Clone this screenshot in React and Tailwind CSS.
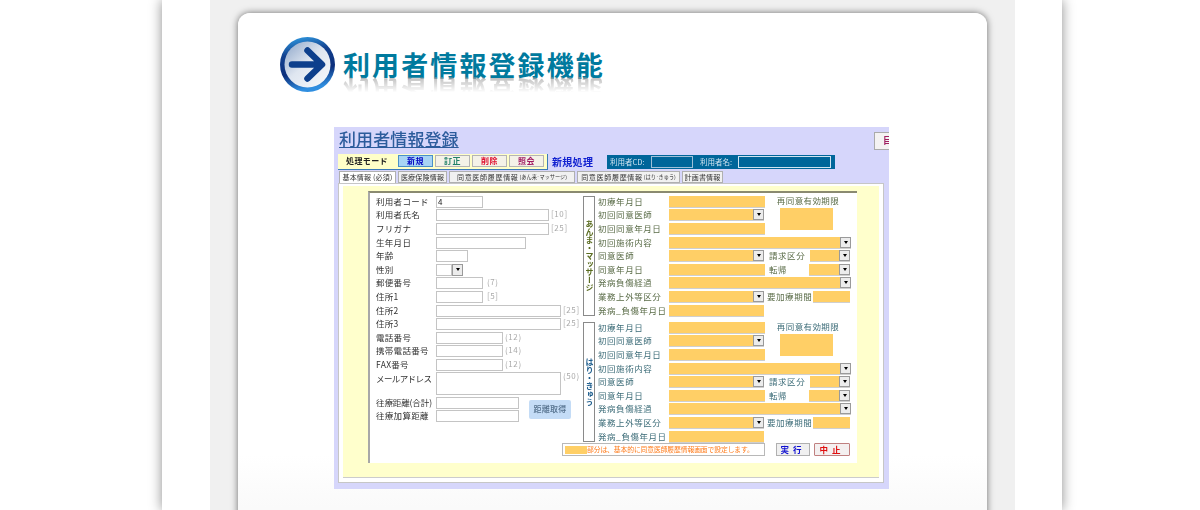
import React from "react";

const jp = "[font-family:'Noto_Sans_CJK_JP',sans-serif]";

function Arrow() {
  return (
    <span className="flex h-full w-[11px] shrink-0 items-center justify-center border border-[#9a9a9a] bg-[#ececec]">
      <span className="h-0 w-0 border-x-[2.5px] border-t-[3px] border-x-transparent border-t-black" />
    </span>
  );
}

function Orange({ w, arrow }) {
  return (
    <span className={`flex h-[12px] shrink-0 items-stretch justify-end border-b border-[#cfcfcf] bg-[#ffcf66] ${w}`}>
      {arrow && <Arrow />}
    </span>
  );
}

function LeftRow({ label, w, note, value, arrow, noteClass = "ml-[2px]", rowH = "h-[13.6px]", inputH, alignTop, labelCls = "tracking-[0.3px]" }) {
  return (
    <div className={`flex ${alignTop ? "items-start" : "items-center"} ${rowH}`}>
      <span className={`-mt-[2px] w-[60px] shrink-0 whitespace-nowrap text-[8.5px] leading-[12px] text-[#333] ${labelCls} ${alignTop ? "pt-[2px]" : ""}`}>{label}</span>
      <span className={`relative flex items-center border border-[#c4c4c4] bg-white pl-[1px] text-[8px] text-[#222] ${w} ${inputH || "h-[12px]"}`}>
        {value}
        {arrow && <span className="absolute -right-[12px] -top-px h-[12px]"><Arrow /></span>}
      </span>
      {note && <span className={`-mt-[2px] whitespace-nowrap text-[8px] tracking-[0.6px] text-[#aaa] ${noteClass}`}>{note}</span>}
    </div>
  );
}

function RightLabel({ children, w = "w-[71px]", cls }) {
  return <span className={`-mt-[2px] shrink-0 whitespace-nowrap text-[8.5px] leading-[12px] tracking-[0.55px] ${w} ${cls}`}>{children}</span>;
}

function Group({ side, cls, sideCls }) {
  return (
    <div className="flex h-[126px]">
      <div className={`mr-[3px] mt-px flex h-[120px] w-[12px] shrink-0 flex-col items-center justify-center border border-[#8a8a8a] bg-white text-[8px] font-bold leading-[10px] ${sideCls}`}>
        <span className="[writing-mode:vertical-rl]">{side}</span>
      </div>
      <div className={`flex w-[254px] flex-col ${cls}`}>
        <div className="flex">
          <div className="flex w-[167px] flex-col">
            <div className="flex h-[13.6px] items-center"><RightLabel cls={cls}>初療年月日</RightLabel><Orange w="w-[96px]" /></div>
            <div className="flex h-[13.6px] items-center"><RightLabel cls={cls}>初回同意医師</RightLabel><Orange w="w-[95px]" arrow /></div>
            <div className="flex h-[13.6px] items-center"><RightLabel cls={cls}>初回同意年月日</RightLabel><Orange w="w-[96px]" /></div>
          </div>
          <div className="ml-[8px] flex w-[70px] flex-col items-center">
            <span className="-mt-[1px] h-[13.6px] whitespace-nowrap text-[8.5px] leading-[12px] tracking-[0.4px]">再同意有効期限</span>
            <span className="mr-[4px] h-[22px] w-[53px] bg-[#ffcf66]" />
          </div>
        </div>
        <div className="flex h-[13.6px] items-center"><RightLabel cls={cls}>初回施術内容</RightLabel><Orange w="w-[182px]" arrow /></div>
        <div className="flex h-[13.6px] items-center"><RightLabel cls={cls}>同意医師</RightLabel><Orange w="w-[95px]" arrow /><RightLabel w="w-[41px]" cls="ml-[5px]">請求区分</RightLabel><Orange w="w-[40px]" arrow /></div>
        <div className="flex h-[13.6px] items-center"><RightLabel cls={cls}>同意年月日</RightLabel><Orange w="w-[96px]" /><RightLabel w="w-[40px]" cls="ml-[4px]">転帰</RightLabel><Orange w="w-[41px]" arrow /></div>
        <div className="flex h-[13.6px] items-center"><RightLabel cls={cls}>発病負傷経過</RightLabel><Orange w="w-[182px]" arrow /></div>
        <div className="flex h-[13.6px] items-center"><RightLabel cls={cls}>業務上外等区分</RightLabel><Orange w="w-[95px]" arrow /><RightLabel w="w-[46px]" cls="ml-[3px] tracking-[0.1px]">要加療期間</RightLabel><Orange w="w-[37px]" /></div>
        <div className="flex h-[13.6px] items-center"><RightLabel cls={cls}>発病_負傷年月日</RightLabel><Orange w="w-[95px]" /></div>
      </div>
    </div>
  );
}

function ToolButton({ children, cls }) {
  return (
    <span className={`flex h-[12px] w-[35px] items-center justify-center border border-[#b5b5b5] bg-[#f4f2e8] text-[8px] font-bold tracking-[0.5px] ${cls}`}>{children}</span>
  );
}

function Tab({ children, sub, w, active }) {
  return (
    <span className={`flex h-[12px] items-center justify-center whitespace-nowrap border border-[#b0b0b0] text-[7px] text-[#333] ${w} ${active ? "border-b-0 bg-white" : "bg-[#f1f1f1]"}`}>
      <span className={sub ? "tracking-[0.7px]" : "tracking-[0.2px]"}>{children}</span>
      {sub && <span className="ml-[1px] text-[5.2px]">{sub}</span>}
    </span>
  );
}

function Screen() {
  return (
    <div className={`ml-[54px] mt-[35px] h-[362px] w-[555px] overflow-hidden bg-[#d6d6fb] pl-[4px] pt-[3px] blur-[0.35px] ${jp}`}>
      <div className="flex h-[22px] items-start">
        <span className="-mt-[2px] ml-px w-[121px] shrink-0 whitespace-nowrap text-[17px] font-medium leading-[21px] tracking-[0.1px] text-[#2c5c9c] underline decoration-1 underline-offset-1">利用者情報登録</span>
        <span className="ml-[414px] mt-[2px] flex h-[18px] w-[24px] shrink-0 items-center whitespace-nowrap border border-[#aaa] bg-[#f4f2f2] pl-[8px] text-[9px] font-bold text-[#a02060]">目</span>
      </div>
      <div className="mt-[1px] flex h-[17px] items-center">
        <div className="flex h-[16px] w-[210px] items-center border-b border-r border-[#3a7ab8] bg-[#ffffc8] pl-[8px]">
          <span className="w-[52px] whitespace-nowrap text-[8px] font-bold tracking-[0.4px] text-[#222]">処理モード</span>
          <div className="flex gap-[2px]">
            <ToolButton cls="!bg-[#a8d4f4] !border-[#4a90c8] text-[#0000c0]">新規</ToolButton>
            <ToolButton cls="text-[#208068]">訂正</ToolButton>
            <ToolButton cls="text-[#e01030]">削除</ToolButton>
            <ToolButton cls="text-[#a01860]">照会</ToolButton>
          </div>
        </div>
        <span className="ml-[4px] w-[55px] whitespace-nowrap text-[10px] font-bold tracking-[0.3px] text-[#1020d0]">新規処理</span>
        <div className="flex h-[14px] w-[228px] items-center bg-[#00669a] pl-[3px] text-[7.5px] text-[#cfe4f0]">
          <span className="w-[41px] whitespace-nowrap">利用者CD:</span>
          <span className="h-[12px] w-[42px] border border-[#9fc0d8]" />
          <span className="ml-[7px] w-[38px] whitespace-nowrap">利用者名:</span>
          <span className="h-[12px] w-[93px] border border-[#cfe4f0]" />
        </div>
      </div>
      <div className="flex h-[13px] items-end gap-[2px] pl-[1px]">
        <Tab w="w-[57px]" active>基本情報 (必須)</Tab>
        <Tab w="w-[49px]">医療保険情報</Tab>
        <Tab w="w-[126px]" sub="(あん来･マッサージ)">同意医師履歴情報</Tab>
        <Tab w="w-[103px]" sub="(はり･きゅう)">同意医師履歴情報</Tab>
        <Tab w="w-[41px]">計画書情報</Tab>
      </div>
      <div className="h-[300px] w-[546px] border border-[#c6c6c6] bg-white pb-[4px] pl-[4px] pt-[2px]">
        <div className="h-full w-[536px] border-b border-[#cccccc] bg-[#ffffcc] pl-[25px] pt-[5px]">
          <div className="h-[272px] w-[489px] border-l-2 border-t-2 border-l-[#a8a8a8] border-t-[#8a8a70] bg-white pl-[6px] pt-[2px]">
            <div className="flex">
              <div className="flex w-[207px] shrink-0 flex-col">
                <LeftRow label="利用者コード" w="w-[47px]" value="4" />
                <LeftRow label="利用者氏名" w="w-[113px]" note="[10]" />
                <LeftRow label="フリガナ" w="w-[113px]" note="[25]" />
                <LeftRow label="生年月日" w="w-[90px]" />
                <LeftRow label="年齢" w="w-[32px]" />
                <LeftRow label="性別" w="w-[16px]" arrow />
                <LeftRow label="郵便番号" w="w-[47px]" note="(7)" noteClass="ml-[4px]" />
                <LeftRow label="住所1" w="w-[47px]" note="[5]" noteClass="ml-[4px]" />
                <LeftRow label="住所2" w="w-[125px]" note="[25]" />
                <LeftRow label="住所3" w="w-[125px]" note="[25]" />
                <LeftRow label="電話番号" w="w-[67px]" note="(12)" />
                <LeftRow label="携帯電話番号" w="w-[67px]" note="(14)" />
                <LeftRow label="FAX番号" w="w-[67px]" note="(12)" />
                <LeftRow label="メールアドレス" w="w-[125px]" note="(50)" rowH="h-[24px]" inputH="h-[23px]" alignTop labelCls="tracking-[-0.6px]" />
                <div className="flex">
                  <div className="flex flex-col">
                    <LeftRow label="往療距離(合計)" w="w-[83px]" labelCls="tracking-[-0.1px]" />
                    <LeftRow label="往療加算距離" w="w-[83px]" />
                  </div>
                  <span className="ml-[10px] mt-[4px] flex h-[19px] w-[42px] items-center justify-center rounded-[2px] bg-[#c4dcf6] text-[8px] font-medium tracking-[0.2px] text-[#54708c]">距離取得</span>
                </div>
              </div>
              <div className="flex flex-col">
                <Group side="あんま・マッサージ" cls="text-[#5a6c48]" sideCls="text-[#5a6c20]" />
                <Group side="はり・きゅう" cls="text-[#3c6c78]" sideCls="text-[#1c5c8c]" />
                <div className="-ml-[21px] -mt-[4px] flex h-[13px] items-center">
                  <div className="flex h-[13px] w-[203px] items-center overflow-hidden border border-[#b8b8b8] bg-white pl-[2px]">
                    <span className="h-[8px] w-[22px] shrink-0 bg-[#ffcf66]" />
                    <span className="whitespace-nowrap text-[6.8px] tracking-[-0.1px] text-[#ff7a18]">部分は、基本的に同意医師履歴情報画面で設定します。</span>
                  </div>
                  <span className="ml-[11px] flex h-[13px] w-[34px] items-center justify-center border border-[#b0b0b0] bg-[#f0f0f0] text-[8.5px] font-bold tracking-[4px] text-[#1010d0]">実行</span>
                  <span className="ml-[4px] flex h-[13px] w-[36px] items-center justify-center rounded-[1px] border border-[#c08080] bg-[#f4f0f0] text-[8.5px] font-bold tracking-[4px] text-[#e01010]">中止</span>
                </div>
              </div>
            </div>
          </div>
        </div>
      </div>
    </div>
  );
}

function ArrowBadge() {
  return (
    <svg width="55" height="55" viewBox="0 0 55 55" className="shrink-0">
      <defs>
        <linearGradient id="rim" x1="0" y1="0" x2="0.2" y2="1">
          <stop offset="0" stopColor="#35a8ee" />
          <stop offset="0.35" stopColor="#12408e" />
          <stop offset="0.7" stopColor="#0c2f7c" />
          <stop offset="1" stopColor="#2f8ee0" />
        </linearGradient>
        <linearGradient id="face" x1="0" y1="0" x2="0.9" y2="1">
          <stop offset="0" stopColor="#8ba4c8" />
          <stop offset="0.5" stopColor="#dfe6f0" />
          <stop offset="1" stopColor="#f6f8fb" />
        </linearGradient>
      </defs>
      <circle cx="27.5" cy="27.5" r="27.5" fill="url(#rim)" />
      <circle cx="27.5" cy="27.5" r="23" fill="url(#face)" />
      <path d="M12 27.5H41M27.5 13.5L42 27.5L27.5 41.5" fill="none" stroke="#0d3f8c" strokeWidth="6.5" strokeLinecap="round" strokeLinejoin="round" />
    </svg>
  );
}

export default function App() {
  return (
    <div className="h-[510px] w-[1200px] overflow-hidden bg-white">
      <div className="ml-[162px] h-[510px] w-[900px] bg-white px-[48px] shadow-[0_0_12px_rgba(0,0,0,0.45)]">
        <div className="h-full w-[805px] bg-[#f0f0f0] px-[28px] pt-[13px]">
          <div className="h-[520px] w-[749px] rounded-[12px] bg-gradient-to-b from-white from-85% to-[#fafafa] to-95% pl-[42px] pt-[24px] shadow-[0_0_7px_rgba(0,0,0,0.55)]">
            <div className="flex h-[55px] items-center">
              <ArrowBadge />
              <div className="relative ml-[8px] [font-family:'Noto_Sans_CJK_JP',sans-serif]">
                <span className="block whitespace-nowrap text-[27px] font-bold leading-[30px] tracking-[2.1px] text-[#007a9e]">利用者情報登録機能</span>
                <span aria-hidden="true" className="absolute left-0 top-[26px] block -scale-y-100 whitespace-nowrap text-[27px] font-bold leading-[30px] tracking-[2.1px] text-[#9a9a9a] [mask-image:linear-gradient(to_top,rgba(0,0,0,0.7),transparent_55%)]">利用者情報登録機能</span>
              </div>
            </div>
            <Screen />
          </div>
        </div>
      </div>
    </div>
  );
}
